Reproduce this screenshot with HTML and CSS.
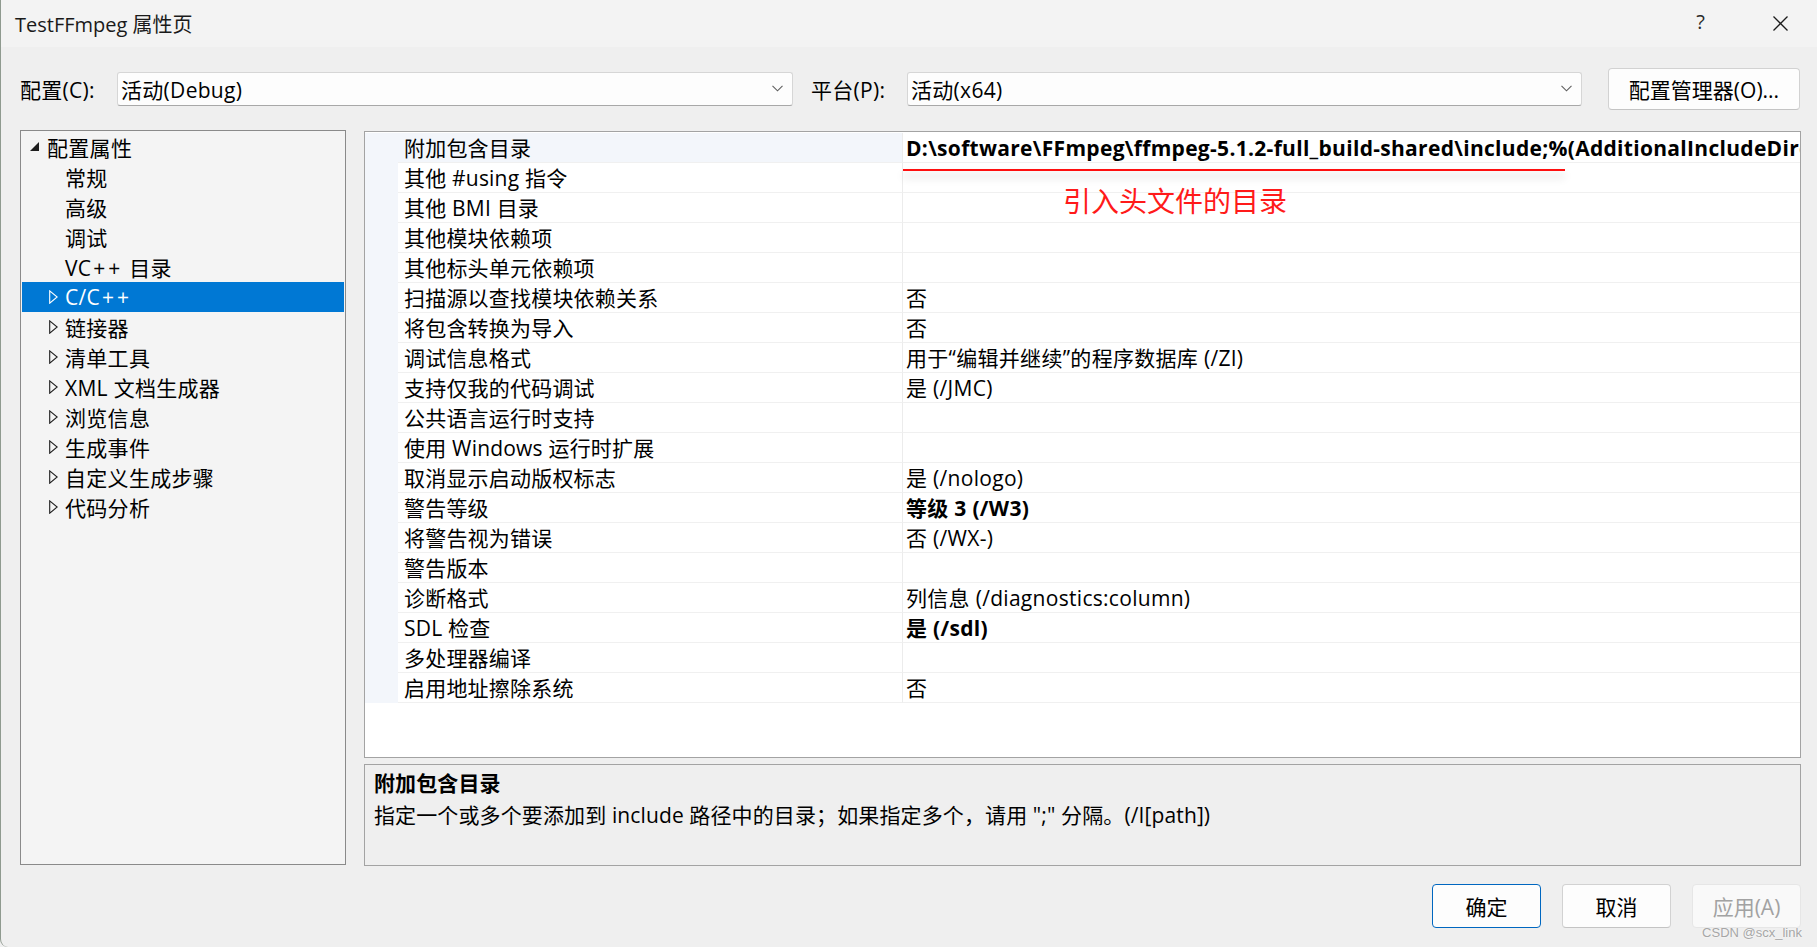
FILE: index.html
```html
<!DOCTYPE html>
<html lang="zh-CN">
<head>
<meta charset="utf-8">
<title>TestFFmpeg 属性页</title>
<link rel="stylesheet" href="styles.css">
</head>
<body>
<div class="window">
  <header class="titlebar">
    <span class="title">TestFFmpeg 属性页</span>
    <span class="help">?</span>
    <svg class="close" width="15" height="15" viewBox="0 0 15 15"><path d="M0.5 0.5 L14.5 14.5 M14.5 0.5 L0.5 14.5" stroke="#1b1b1b" stroke-width="1.3" fill="none"/></svg>
  </header>

  <div class="config-bar">
    <span class="lbl lbl-config">配置(C):</span>
    <div class="combo combo-config">
      <span class="combo-text">活动(Debug)</span>
      <svg class="chev" width="11" height="7" viewBox="0 0 11 7"><path d="M0.5 0.8 L5.5 5.8 L10.5 0.8" stroke="#5f5f5f" stroke-width="1.1" fill="none"/></svg>
    </div>
    <span class="lbl lbl-platform">平台(P):</span>
    <div class="combo combo-platform">
      <span class="combo-text">活动(x64)</span>
      <svg class="chev" width="11" height="7" viewBox="0 0 11 7"><path d="M0.5 0.8 L5.5 5.8 L10.5 0.8" stroke="#5f5f5f" stroke-width="1.1" fill="none"/></svg>
    </div>
    <button class="btn btn-manager">配置管理器(O)...</button>
  </div>

  <div class="main">
    <nav class="tree">
      <div class="node root"><svg class="tw tw-open" width="11" height="11" viewBox="0 0 11 11"><path d="M10 1 L10 10 L1 10 Z" fill="#1e1e1e"/></svg><span>配置属性</span></div>
      <div class="node leaf"><span>常规</span></div>
      <div class="node leaf"><span>高级</span></div>
      <div class="node leaf"><span>调试</span></div>
      <div class="node leaf"><span>VC<span class="pp">++</span> 目录</span></div>
      <div class="node branch selected"><svg class="tw" width="9" height="14" viewBox="0 0 9 14"><path d="M0.7 0.8 L8.2 7 L0.7 13.2 Z" fill="none" stroke="currentColor" stroke-width="1.1"/></svg><span>C/C<span class="pp">++</span></span></div>
      <div class="node branch"><svg class="tw" width="9" height="14" viewBox="0 0 9 14"><path d="M0.7 0.8 L8.2 7 L0.7 13.2 Z" fill="none" stroke="currentColor" stroke-width="1.1"/></svg><span>链接器</span></div>
      <div class="node branch"><svg class="tw" width="9" height="14" viewBox="0 0 9 14"><path d="M0.7 0.8 L8.2 7 L0.7 13.2 Z" fill="none" stroke="currentColor" stroke-width="1.1"/></svg><span>清单工具</span></div>
      <div class="node branch"><svg class="tw" width="9" height="14" viewBox="0 0 9 14"><path d="M0.7 0.8 L8.2 7 L0.7 13.2 Z" fill="none" stroke="currentColor" stroke-width="1.1"/></svg><span>XML 文档生成器</span></div>
      <div class="node branch"><svg class="tw" width="9" height="14" viewBox="0 0 9 14"><path d="M0.7 0.8 L8.2 7 L0.7 13.2 Z" fill="none" stroke="currentColor" stroke-width="1.1"/></svg><span>浏览信息</span></div>
      <div class="node branch"><svg class="tw" width="9" height="14" viewBox="0 0 9 14"><path d="M0.7 0.8 L8.2 7 L0.7 13.2 Z" fill="none" stroke="currentColor" stroke-width="1.1"/></svg><span>生成事件</span></div>
      <div class="node branch"><svg class="tw" width="9" height="14" viewBox="0 0 9 14"><path d="M0.7 0.8 L8.2 7 L0.7 13.2 Z" fill="none" stroke="currentColor" stroke-width="1.1"/></svg><span>自定义生成步骤</span></div>
      <div class="node branch"><svg class="tw" width="9" height="14" viewBox="0 0 9 14"><path d="M0.7 0.8 L8.2 7 L0.7 13.2 Z" fill="none" stroke="currentColor" stroke-width="1.1"/></svg><span>代码分析</span></div>
    </nav>

    <section class="right">
      <div class="grid">
        <div class="prop selected"><div class="gut"></div><div class="pname">附加包含目录</div><div class="pval bold">D:\software\FFmpeg\ffmpeg-5.1.2-full_build-shared\include;%(AdditionalIncludeDirectories)</div></div>
        <div class="prop"><div class="gut"></div><div class="pname">其他 #using 指令</div><div class="pval"></div></div>
        <div class="prop"><div class="gut"></div><div class="pname">其他 BMI 目录</div><div class="pval"></div></div>
        <div class="prop"><div class="gut"></div><div class="pname">其他模块依赖项</div><div class="pval"></div></div>
        <div class="prop"><div class="gut"></div><div class="pname">其他标头单元依赖项</div><div class="pval"></div></div>
        <div class="prop"><div class="gut"></div><div class="pname">扫描源以查找模块依赖关系</div><div class="pval">否</div></div>
        <div class="prop"><div class="gut"></div><div class="pname">将包含转换为导入</div><div class="pval">否</div></div>
        <div class="prop"><div class="gut"></div><div class="pname">调试信息格式</div><div class="pval">用于“编辑并继续”的程序数据库 (/ZI)</div></div>
        <div class="prop"><div class="gut"></div><div class="pname">支持仅我的代码调试</div><div class="pval">是 (/JMC)</div></div>
        <div class="prop"><div class="gut"></div><div class="pname">公共语言运行时支持</div><div class="pval"></div></div>
        <div class="prop"><div class="gut"></div><div class="pname">使用 Windows 运行时扩展</div><div class="pval"></div></div>
        <div class="prop"><div class="gut"></div><div class="pname">取消显示启动版权标志</div><div class="pval">是 (/nologo)</div></div>
        <div class="prop"><div class="gut"></div><div class="pname">警告等级</div><div class="pval bold">等级 3 (/W3)</div></div>
        <div class="prop"><div class="gut"></div><div class="pname">将警告视为错误</div><div class="pval">否 (/WX-)</div></div>
        <div class="prop"><div class="gut"></div><div class="pname">警告版本</div><div class="pval"></div></div>
        <div class="prop"><div class="gut"></div><div class="pname">诊断格式</div><div class="pval">列信息 (/diagnostics:column)</div></div>
        <div class="prop"><div class="gut"></div><div class="pname">SDL 检查</div><div class="pval bold">是 (/sdl)</div></div>
        <div class="prop"><div class="gut"></div><div class="pname">多处理器编译</div><div class="pval"></div></div>
        <div class="prop"><div class="gut"></div><div class="pname">启用地址擦除系统</div><div class="pval">否</div></div>
        <div class="red-line"></div>
        <div class="red-note">引入头文件的目录</div>
      </div>
      <div class="desc">
        <div class="desc-title">附加包含目录</div>
        <div class="desc-text">指定一个或多个要添加到 include 路径中的目录；如果指定多个，请用 ";" 分隔。(/I[path])</div>
      </div>
    </section>
  </div>

  <footer class="footer">
    <button class="btn btn-dlg btn-primary">确定</button>
    <button class="btn btn-dlg">取消</button>
    <button class="btn btn-dlg btn-disabled">应用(A)</button>
  </footer>
  <div class="watermark">CSDN @scx_link</div>
</div>
</body>
</html>
```

FILE: styles.css
```css
* { box-sizing: border-box; }
html, body { margin: 0; padding: 0; }
body {
  width: 1817px;
  height: 947px;
  overflow: hidden;
  background: #efefef;
  font-family: "Open Sans", "Noto Sans CJK SC", sans-serif;
  font-size: 21px;
  color: #000;
}
.window {
  position: relative;
  width: 1817px;
  height: 947px;
  background: #efefef;
  border-left: 1px solid #8f9a8f;
  border-bottom-left-radius: 8px;
  display: flex;
  flex-direction: column;
}

/* title bar */
.titlebar {
  height: 47px;
  flex: none;
  background: #f3f3f3;
  display: flex;
  align-items: center;
  padding-left: 14px;
}
.title { font-size: 20px; color: #1a1a1a; }
.help {
  margin-left: auto;
  margin-top: -4px;
  font-size: 20px;
  color: #2a2a2a;
  margin-right: 68px;
}
.close { margin-right: 29px; }

/* config bar */
.config-bar {
  height: 83px;
  flex: none;
  display: flex;
  align-items: center;
  padding-left: 19px;
  letter-spacing: 0.3px;
}
.lbl { white-space: nowrap; }
.lbl-config { width: 97px; }
.lbl-platform { width: 96px; margin-left: 18px; }
.combo {
  height: 34px;
  background: #fdfdfd;
  border: 1px solid #d6d6d6;
  border-bottom-color: #a8a8a8;
  border-radius: 3px;
  display: flex;
  align-items: center;
  padding-left: 3px;
  padding-right: 9px;
}
.combo-config { width: 676px; }
.combo-platform { width: 675px; }
.combo-text { flex: 1; }
.btn {
  font-family: inherit;
  font-size: 21px;
  color: #000;
  background: #fdfdfd;
  border: 1px solid #d2d2d2;
  border-bottom-color: #c4c4c4;
  border-radius: 4px;
  padding: 0;
}
.btn-manager { margin-left: 26px; width: 192px; height: 42px; }

/* main */
.main {
  flex: none;
  display: flex;
  gap: 18px;
  padding-left: 19px;
  height: 736px;
}
.tree {
  width: 326px;
  height: 735px;
  background: #f4f4f4;
  border: 1px solid #8a8a8a;
  padding-top: 1px;
  letter-spacing: 0.3px;
}
.node {
  height: 30px;
  display: flex;
  align-items: center;
  white-space: nowrap;
  margin: 0 1px;
}
.pp { letter-spacing: 3px; margin-left: 2px; }
.node.root { padding-left: 7px; }
.node.root .tw { margin-right: 7px; margin-top: -2px; }
.node.leaf { padding-left: 43px; }
.node.branch { padding-left: 27px; color: #000; }
.node.branch .tw { margin-right: 7px; color: #1e1e1e; }
.node.selected { background: #0078d4; color: #fff; }
.node.selected .tw { color: #fff; }

.right {
  width: 1437px;
  display: flex;
  flex-direction: column;
  gap: 6px;
}
.grid {
  position: relative;
  margin-top: 1px;
  height: 627px;
  background: #fff;
  border: 1px solid #a3a3a3;
  padding-top: 1px;
  overflow: hidden;
  letter-spacing: 0.3px;
}
.prop {
  display: grid;
  grid-template-columns: 33px 504px 1fr;
  height: 30px;
}
.gut { background: #f3f6fb; }
.pname {
  padding-left: 6px;
  padding-top: 2px;
  line-height: 27px;
  border-bottom: 1px solid #f0f0f0;
  white-space: nowrap;
  letter-spacing: 0.2px;
}
.pval {
  padding-left: 3px;
  padding-top: 2px;
  line-height: 27px;
  border-left: 1px solid #ececec;
  border-bottom: 1px solid #f0f0f0;
  white-space: nowrap;
  overflow: hidden;
}
.prop.selected .pname { background: #f3f6fb; }
.bold { font-weight: 700; }

.red-line {
  position: absolute;
  left: 538px;
  top: 37px;
  width: 662px;
  height: 2px;
  background: #ff1010;
  box-shadow: 0 6px 9px rgba(0, 0, 0, 0.22);
}
.red-note {
  position: absolute;
  left: 698px;
  top: 53px;
  font-size: 28px;
  line-height: 32px;
  letter-spacing: 0;
  color: #ff1a1a;
  white-space: nowrap;
}

.desc {
  height: 102px;
  background: #efefef;
  border: 1px solid #a3a3a3;
  padding: 3px 0 0 9px;
  letter-spacing: 0.12px;
}
.desc-title { font-weight: 700; line-height: 31px; }
.desc-text { line-height: 32px; }

/* footer */
.footer {
  flex: none;
  display: flex;
  justify-content: flex-end;
  gap: 21px;
  padding-top: 18px;
  padding-right: 16px;
}
.btn-dlg { width: 109px; height: 44px; }
.btn-primary { border: 1px solid #0067c0; }
.btn-disabled { background: #f9f9f9; border-color: #e6e6e6; color: #a2a2a2; }

.watermark {
  position: absolute;
  right: 15px;
  bottom: 7px;
  font-family: "Liberation Sans", sans-serif;
  font-size: 13px;
  color: #a6a6a6;
  text-shadow: 0 0 2px #fff;
}
```
